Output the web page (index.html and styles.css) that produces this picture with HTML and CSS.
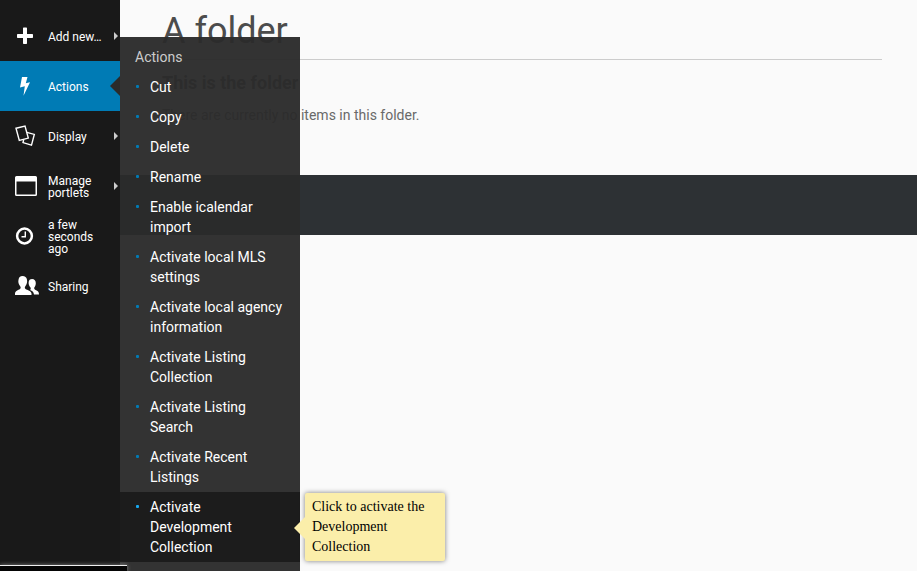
FILE: index.html
```html
<!DOCTYPE html>
<html lang="en">
<head>
<meta charset="utf-8">
<title>A folder</title>
<link rel="stylesheet" href="styles.css">
</head>
<body>
<div class="page">
  <nav class="toolbar">
    <a class="tool has-menu"><svg class="icon" viewBox="0 0 26 26"><path d="M11 5.200q0-.7.7-.7h2.600q.7 0 .7.7V11h5.300q.7 0 .7.7v2.600q0 .7-.7.7H15v5.300q0 .7-.7.7h-2.600q-.7 0-.7-.7V15H5.700q-.7 0-.7-.7v-2.600q0-.7.7-.7H11z"/></svg><span>Add new…</span></a>
    <a class="tool active"><svg class="icon" viewBox="0 0 26 26"><path d="M10 4h5.500L13.800 10.200l4.200-1-6.500 13.600 1.300-9.600L8 14.500z"/></svg><span>Actions</span></a>
    <a class="tool has-menu"><svg class="icon" viewBox="0 0 26 26"><path class="line" d="M4 5.200l9-2.200 3.300 12.100-9 2.300z"/><path class="line" d="M14.800 9.400l7.500 2-2.800 10.700-8.500-2.500.7-3"/></svg><span>Display</span></a>
    <a class="tool has-menu"><svg class="icon" viewBox="0 0 26 26"><path fill-rule="evenodd" d="M4.500 3h19Q25 3 25 4.500v17q0 1.500-1.500 1.500h-19Q3 23 3 21.500v-17Q3 3 4.500 3zM4.500 8.500v13h19v-13z"/></svg><span>Manage portlets</span></a>
    <a class="tool"><svg class="icon" viewBox="0 0 26 26"><circle class="ring" cx="12.500" cy="13" r="7.400"/><path class="line" d="M13.300 8.500v5.200H9.500"/></svg><span>a few seconds ago</span></a>
    <a class="tool"><svg class="icon people" viewBox="0 0 26 26"><path d="M18.500 14.500c-1.500-1.800-2.200-3.700-1.800-5.800C17 6.700 18.700 6 20 6c2.500 0 3.800 1.800 3.800 4.200 0 1.800-.8 3.400-1.500 4.300-.3 1 .1 1.900 1.300 2.500 2.200 1 3.400 1.700 3.400 4.500h-5c-.4-2.500-1.800-3.500-3.900-4.400.7-.7.8-1.500.4-2.600z"/><path d="M3 22v-1.500c0-2.500 3.200-3.500 5-4.500 1-.7.8-1.800 0-2.900-1.500-2-2-4.200-1.500-6.400C7 4.300 8 3 10.500 3s4 1.300 4.500 3.700c.4 2.200-.1 4.400-1.500 6.400-.8 1.100-1 2.200 0 2.900 1.800 1 6 2 6 4.500V22z"/></svg><span>Sharing</span></a>
  </nav>
  <main class="content">
    <h1>A folder</h1>
    <p class="lead">This is the folder</p>
    <p class="empty">There are currently no items in this folder.</p>
    <footer></footer>
  </main>
  <section class="menu">
    <h2>Actions</h2>
    <ul>
      <li>Cut</li>
      <li>Copy</li>
      <li>Delete</li>
      <li>Rename</li>
      <li>Enable icalendar import</li>
      <li>Activate local MLS settings</li>
      <li>Activate local agency information</li>
      <li>Activate Listing Collection</li>
      <li>Activate Listing Search</li>
      <li>Activate Recent Listings</li>
      <li class="hover">Activate Development Collection</li>
    </ul>
  </section>
  <div class="status"></div>
  <div class="tip">Click to activate the Development Collection</div>
</div>
</body>
</html>
```

FILE: styles.css
```css
* { box-sizing: border-box; }
body { margin: 0; font-family: Roboto, sans-serif; background: #fafafa; }
.page { position: relative; display: flex; width: 917px; height: 571px; overflow: hidden; }
.toolbar { width: 120px; flex: none; padding-top: 11px; background: #191919; }
.tool { position: relative; display: flex; align-items: center; height: 50px; padding: 2px 15px 0 12px; color: #fff; font-size: 12px; line-height: 12px; }
.tool span { width: 56px; }
.icon { width: 26px; height: 26px; margin: -2px 10px 0 0; flex: none; fill: #fff; overflow: visible; }
.line { fill: none; stroke: #fff; stroke-width: 1.4; }
.ring { fill: none; stroke: #fff; stroke-width: 2.500; }
.active { background: #007bb5; }
.has-menu::after { content: ""; position: absolute; right: 2px; top: 21px; border: 4px solid transparent; border-left-color: #ccc; border-right: 0; }
.active::after { content: ""; position: absolute; right: 0; top: 15px; border: 10px solid transparent; border-right-color: #2b2b2b; border-left: 0; }
.content { flex: 1; color: #4c4c4c; }
h1 { margin: 0 35px 0 42px; height: 60px; padding-top: 9px; border-bottom: 1px solid #ccc; font-size: 36px; font-weight: 400; line-height: 44px; }
.lead { margin: 13px 42px 0; font-size: 18px; line-height: 20px; font-weight: 700; }
.empty { margin: 12px 42px 0; font-size: 14px; line-height: 20px; color: #696969; }
footer { height: 60px; margin-top: 50px; background: #2d3134; }
.menu { position: absolute; left: 120px; top: 37px; width: 180px; height: 534px; background: rgba(43, 43, 43, .96); color: #fff; font-size: 14px; line-height: 20px; }
.menu h2 { margin: 0; padding: 10px 15px 5px; font-size: 14px; font-weight: 400; color: #ccc; }
.menu ul { margin: 0; padding: 0; list-style: none; }
.menu li { position: relative; padding: 5px 15px 5px 30px; }
.menu li::before { content: ""; position: absolute; left: 16px; top: 13px; width: 3px; height: 3px; border-radius: 1px; background: #007bb5; }
.menu .hover { background: #1c1c1c; }
.menu .hover::before { background: #16a8f0; }
.status { position: absolute; left: 0; bottom: 0; width: 127px; height: 6px; background: #050505; border-top: 1px solid #eee; box-shadow: 0 0 4px rgba(255, 255, 255, .45); }
.tip { position: absolute; left: 305px; top: 493px; width: 140px; height: 68px; padding: 4px 7px; background: #fbeeaa; border-radius: 2px; box-shadow: 0 0 5px rgba(0, 0, 0, .5); color: #000; font: 14px/20px "Liberation Serif", serif; }
.tip::before { content: ""; position: absolute; left: -11px; top: 24px; border: 11px solid transparent; border-right-color: #fbeeaa; border-left: 0; }
```
